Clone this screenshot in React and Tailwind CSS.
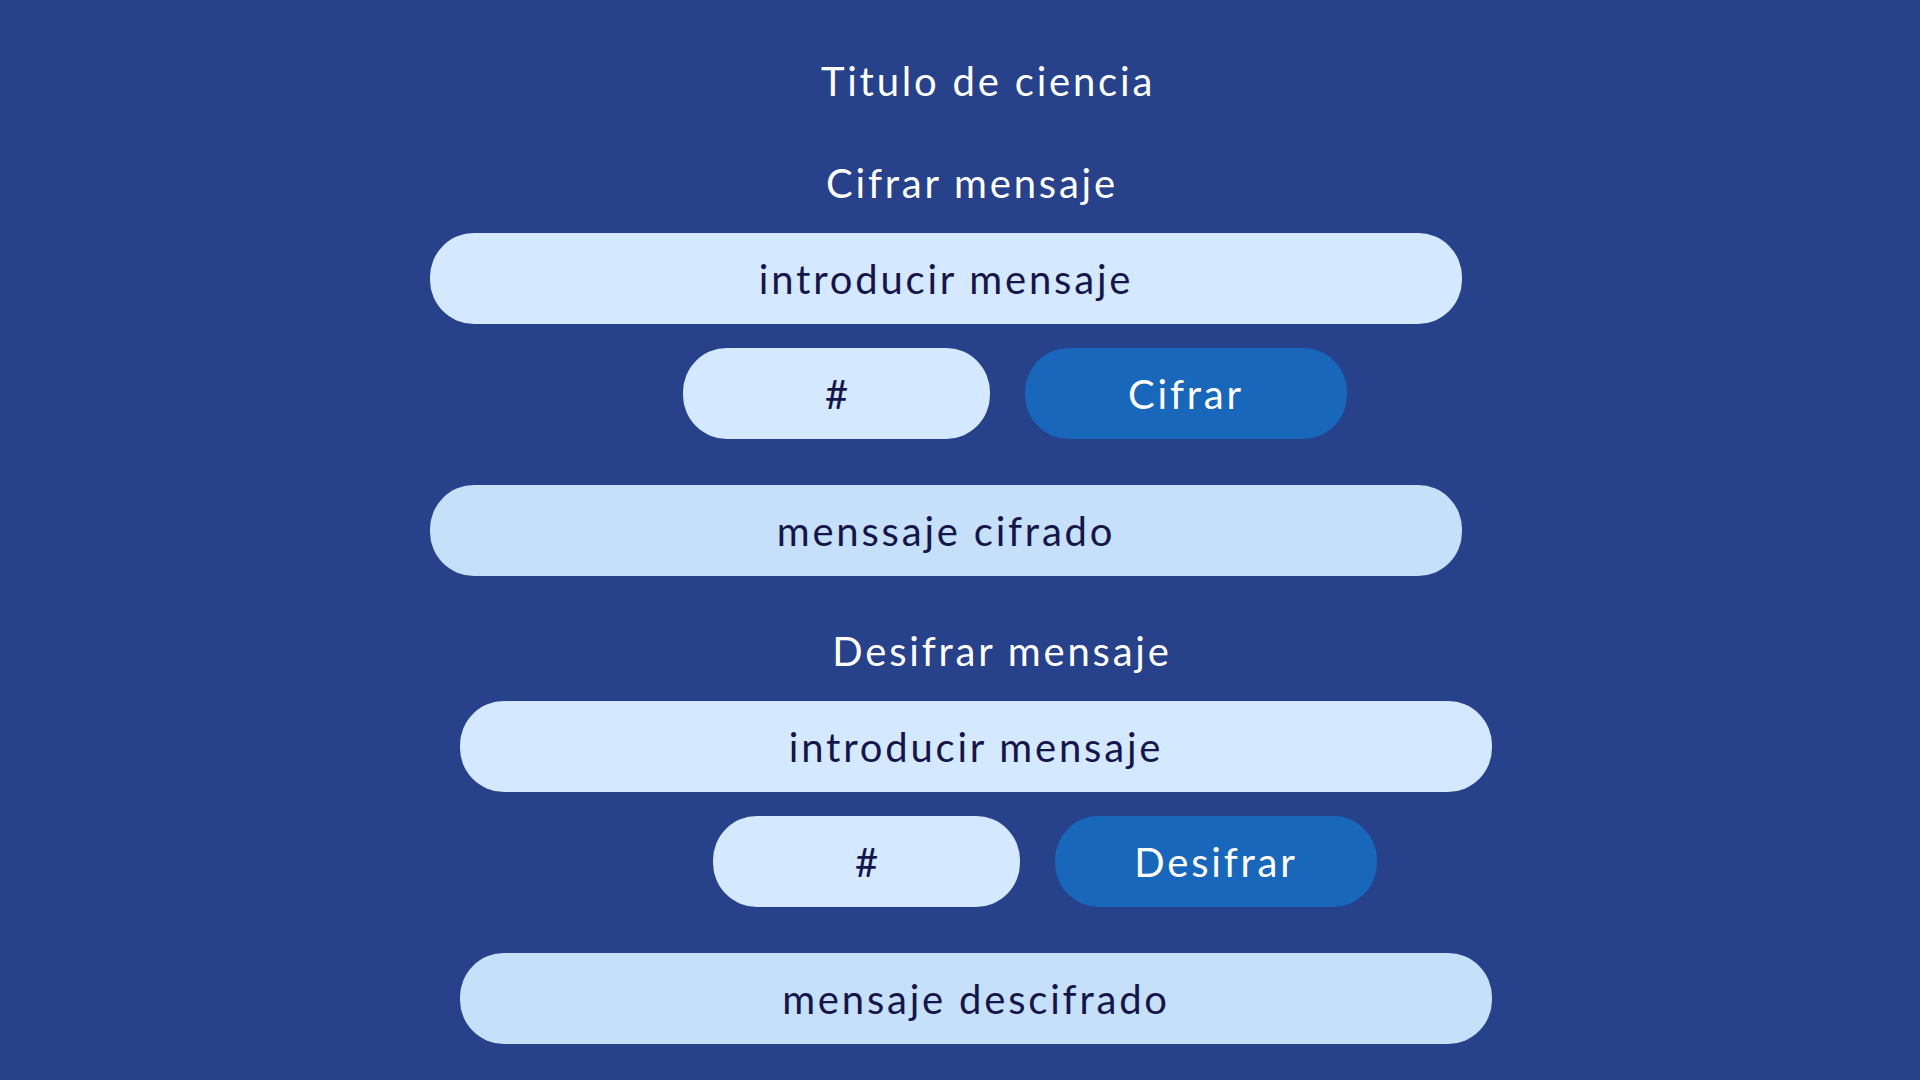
import React from 'react';

const font = { fontFamily: 'Lato, "Open Sans", sans-serif' };

function Bar({ text, light }) {
  return (
    <div className={`w-[1032px] h-[91px] rounded-[44px] flex items-center justify-center text-[40px] leading-[48px] tracking-[0.07em] text-[#15154a] ${light ? 'bg-[#d4e8ff]' : 'bg-[#c5e0f8]'}`}>
      {text}
    </div>
  );
}

function CipherSection({ heading, input, action, output, offset }) {
  return (
    <div className={`flex flex-col w-[1032px] ${offset}`}>
      <h2 className="pl-[52px] text-center text-[40px] leading-[48px] tracking-[0.07em] text-white">{heading}</h2>
      <div className="mt-[26px]">
        <Bar text={input} light />
      </div>
      <div className="mt-[24px] flex gap-[35px] pl-[253px]">
        <div className="w-[307px] h-[91px] rounded-[44px] bg-[#d4e8ff] flex items-center justify-center text-[40px] text-[#15154a]">#</div>
        <button className="w-[322px] h-[91px] rounded-[44px] bg-[#1967ba] flex items-center justify-center text-[40px] tracking-[0.07em] text-white">{action}</button>
      </div>
      <div className="mt-[46px]">
        <Bar text={output} />
      </div>
    </div>
  );
}

export default function App() {
  return (
    <div style={font} className="w-[1920px] h-[1080px] bg-[#27418a] overflow-hidden flex flex-col">
      <h1 className="mt-[57px] pl-[56px] text-center text-[40px] leading-[48px] tracking-[0.07em] text-white">Titulo de ciencia</h1>
      <div className="mt-[54px]">
        <CipherSection
          heading="Cifrar mensaje"
          input="introducir mensaje"
          action="Cifrar"
          output="menssaje cifrado"
          offset="ml-[430px]"
        />
      </div>
      <div className="mt-[51px]">
        <CipherSection
          heading="Desifrar mensaje"
          input="introducir mensaje"
          action="Desifrar"
          output="mensaje descifrado"
          offset="ml-[460px]"
        />
      </div>
    </div>
  );
}
